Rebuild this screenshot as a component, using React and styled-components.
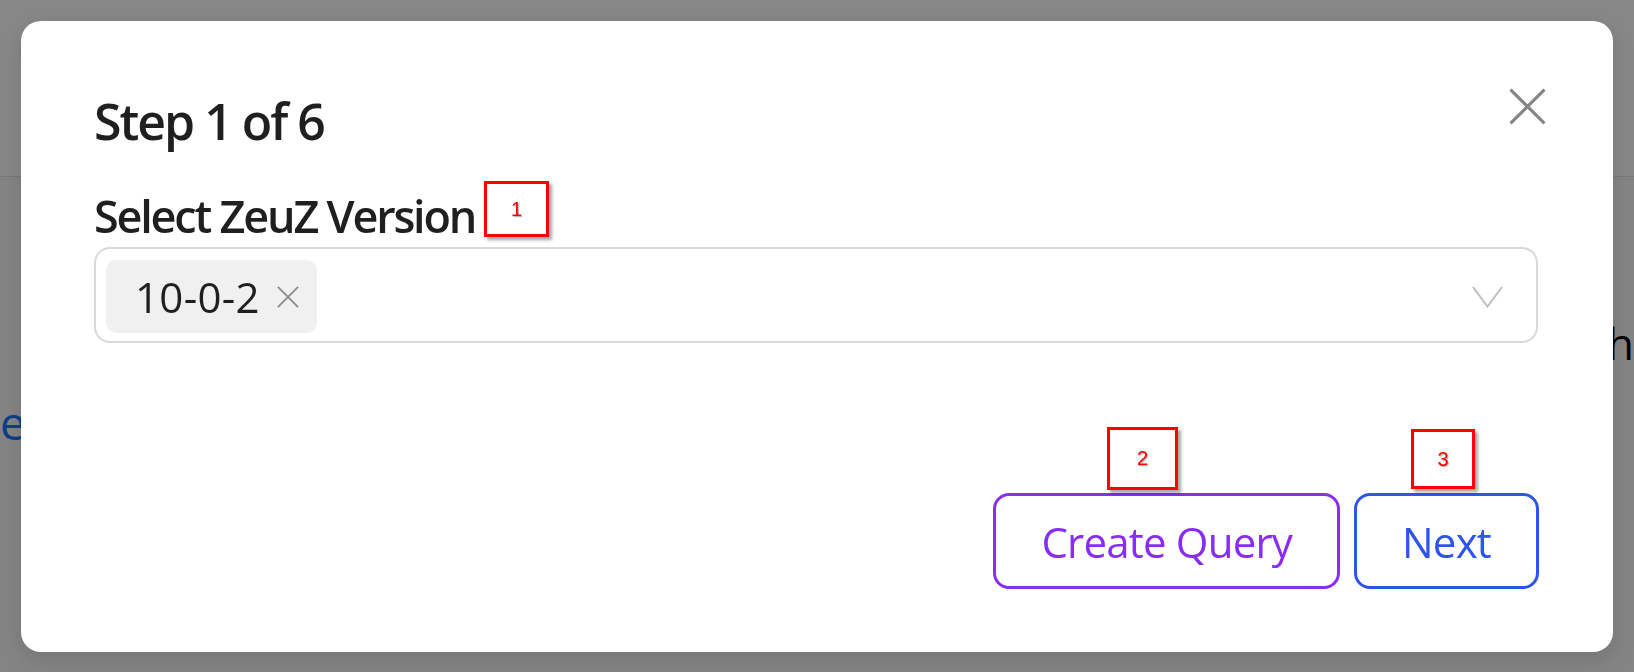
import React from "react"
import styled, { createGlobalStyle } from "styled-components"

const GlobalStyle = createGlobalStyle`
  html, body {
    margin: 0;
    height: 100%;
    overflow: hidden;
  }
  body {
    font-family: "Open Sans", "Noto Sans", sans-serif;
    background: #fafafa;
    color: #1f1f1f;
  }
  * {
    box-sizing: border-box;
  }
`

/* page behind the dialog */
const Page = styled.div`
  height: 100vh;
  display: flex;
  flex-direction: column;
`
const Header = styled.header`
  height: 177px;
  flex-shrink: 0;
  background: #fff;
  border-bottom: 1px solid #e4e4e4;
`
const Body = styled.main`
  flex: 1;
  display: flex;
  flex-direction: column;
  gap: 19px;
  padding-top: 136px;
  overflow: hidden;
`
const BgRow = styled.div`
  display: flex;
  justify-content: ${(p) => (p.$end ? "flex-end" : "flex-start")};
  font-size: ${(p) => p.$size}px;
  line-height: 60px;
  white-space: nowrap;
  color: ${(p) => p.$color || "#000"};
`

/* dialog */
const Overlay = styled.div`
  position: fixed;
  inset: 0;
  display: flex;
  padding: 21px 21px 20px 21px;
  background: rgba(0, 0, 0, 0.47);
`
const Modal = styled.div`
  position: relative;
  flex: 1;
  display: flex;
  flex-direction: column;
  padding: 70px 75px 63px 73px;
  background: #fff;
  border-radius: 20px;
  box-shadow: 0 6px 16px rgba(0, 0, 0, 0.08), 0 9px 28px 8px rgba(0, 0, 0, 0.05);
`
const Title = styled.h2`
  margin: 0;
  font-size: 50px;
  line-height: 60px;
  font-weight: 600;
  letter-spacing: -2px;
  color: #1f1f1f;
`
const CloseButton = styled.button`
  position: absolute;
  top: 67px;
  right: 67px;
  padding: 0;
  border: 0;
  background: none;
  display: flex;
  cursor: pointer;
`
const Label = styled.label`
  margin: 38px 0 4px;
  font-size: 45px;
  line-height: 54px;
  font-weight: 600;
  letter-spacing: -2.2px;
  color: #1f1f1f;
`
const SelectBox = styled.div`
  height: 96px;
  display: flex;
  align-items: center;
  justify-content: space-between;
  padding: 3px 33px 0 10px;
  border: 2px solid #d9d9d9;
  border-radius: 16px;
`
const Tag = styled.span`
  height: 73px;
  display: flex;
  align-items: center;
  gap: 17px;
  padding: 0 18px 0 29px;
  background: #f0f0f0;
  border-radius: 10px;
  font-size: 42px;
  line-height: 57px;
  letter-spacing: 0.3px;
  color: #1f1f1f;
`
const Footer = styled.div`
  margin-top: auto;
  display: flex;
  justify-content: flex-end;
  gap: 14px;
  margin-right: -1px;
`
const Button = styled.button`
  height: 96px;
  padding: 0 45px;
  background: #fff;
  border: 3px solid ${(p) => p.$color};
  border-radius: 16px;
  color: ${(p) => p.$color};
  font-family: inherit;
  font-size: 42px;
  line-height: 57px;
  letter-spacing: -0.8px;
  cursor: pointer;
`

/* red annotation marks laid over the screenshot */
const Mark = styled.div`
  position: fixed;
  left: ${(p) => p.$x}px;
  top: ${(p) => p.$y}px;
  width: ${(p) => p.$w}px;
  height: ${(p) => p.$h}px;
  display: flex;
  align-items: center;
  justify-content: center;
  border: 3px solid #ff0000;
  box-shadow: 3px 3px 3px rgba(0, 0, 0, 0.35);
  font-family: "Liberation Sans", Arial, sans-serif;
  font-size: 20px;
  color: #ff0000;
  text-shadow: 1px 1px 1px rgba(0, 0, 0, 0.35);
`

const XIcon = ({ size, stroke, color }) => (
  <svg width={size} height={size} viewBox="0 0 24 24">
    <path
      d="M1 1 L23 23 M23 1 L1 23"
      stroke={color}
      strokeWidth={stroke}
      fill="none"
    />
  </svg>
)

const Chevron = () => (
  <svg width="31" height="22" viewBox="0 0 31 22">
    <polyline
      points="1,1 15.5,20.5 30,1"
      stroke="#bfbfbf"
      strokeWidth="2"
      fill="none"
    />
  </svg>
)

const marks = [
  { n: 1, x: 484, y: 181, w: 65, h: 56 },
  { n: 2, x: 1107, y: 427, w: 71, h: 63 },
  { n: 3, x: 1411, y: 429, w: 64, h: 60 },
]

const App = () => (
  <>
    <GlobalStyle />
    <Page>
      <Header />
      <Body>
        <BgRow $end $size={44}>
          Search
        </BgRow>
        <BgRow $size={46} $color="#1677ff">
          exports
        </BgRow>
      </Body>
    </Page>
    <Overlay>
      <Modal>
        <CloseButton aria-label="Close">
          <XIcon size={37} stroke={2} color="#858585" />
        </CloseButton>
        <Title>Step 1 of 6</Title>
        <Label>Select ZeuZ Version</Label>
        <SelectBox>
          <Tag>
            10-0-2
            <XIcon size={22} stroke={2} color="#8c8c8c" />
          </Tag>
          <Chevron />
        </SelectBox>
        <Footer>
          <Button $color="#872cf9">Create Query</Button>
          <Button $color="#2f54eb">Next</Button>
        </Footer>
      </Modal>
    </Overlay>
    {marks.map((m) => (
      <Mark key={m.n} $x={m.x} $y={m.y} $w={m.w} $h={m.h}>
        {m.n}
      </Mark>
    ))}
  </>
)

export default App
